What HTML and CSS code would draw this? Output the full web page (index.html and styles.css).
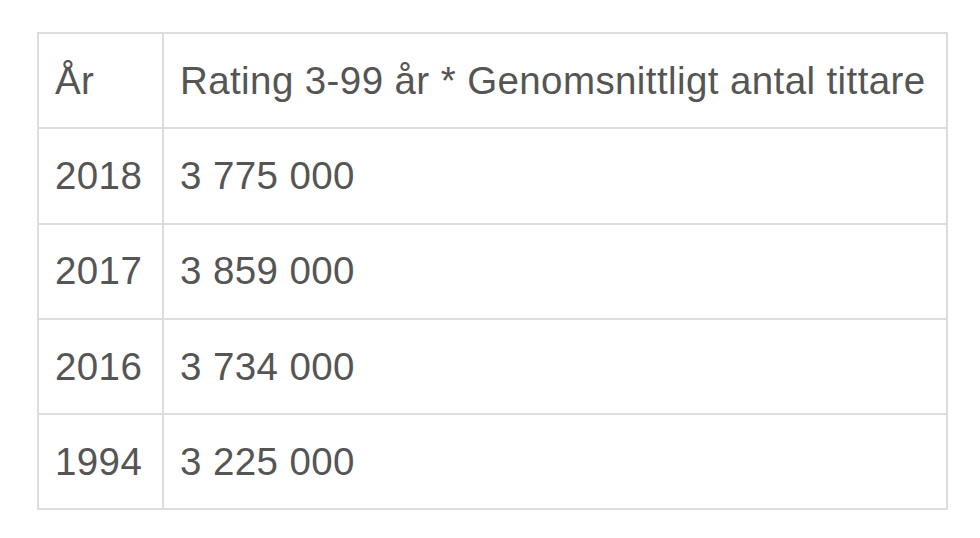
FILE: index.html
```
<!DOCTYPE html>
<html lang="sv">
<head>
<meta charset="utf-8">
<link rel="stylesheet" href="styles.css">
</head>
<body>
<div class="page">
<table class="stats">
<colgroup><col class="c-year"><col class="c-val"></colgroup>
<tr><td>År</td><td>Rating 3-99 år * Genomsnittligt antal tittare</td></tr>
<tr><td>2018</td><td>3 775 000</td></tr>
<tr><td>2017</td><td>3 859 000</td></tr>
<tr><td>2016</td><td>3 734 000</td></tr>
<tr><td>1994</td><td>3 225 000</td></tr>
</table>
</div>
</body>
</html>
```
FILE: styles.css
```
html, body { margin: 0; padding: 0; background: #fff; }
.page { padding: 32px 0 0 37px; }
.stats {
  border-collapse: collapse;
  table-layout: fixed;
  width: 911px;
  font-family: "Liberation Sans", Arial, sans-serif;
  font-size: 38.5px;
  letter-spacing: 0.4px;
  color: #555;
}
.c-year { width: 125px; }
.stats td {
  border: 2px solid #ddd;
  padding: 0 0 0 16px;
  height: 93.3px;
  line-height: 42px;
  vertical-align: middle;
  white-space: nowrap;
}
```
